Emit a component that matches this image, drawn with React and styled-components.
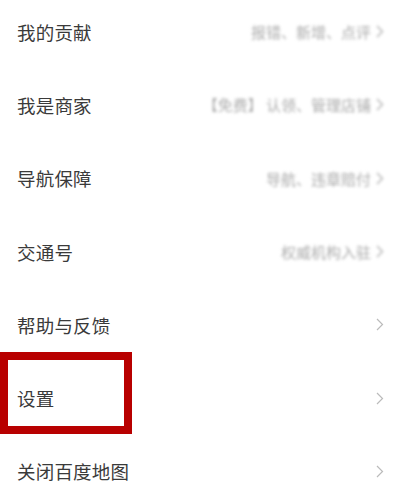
import React from "react"
import styled, { createGlobalStyle } from "styled-components"

const GlobalStyle = createGlobalStyle`
  html, body {
    margin: 0;
    padding: 0;
    background: #fff;
  }
  body {
    font-family: "Noto Sans CJK SC", "Noto Sans", sans-serif;
  }
`

const items = [
  { title: "我的贡献", hint: "报错、新增、点评" },
  { title: "我是商家", hint: "【免费】 认领、管理店铺" },
  { title: "导航保障", hint: "导航、违章赔付" },
  { title: "交通号", hint: "权威机构入驻" },
  { title: "帮助与反馈" },
  { title: "设置", marked: true },
  { title: "关闭百度地图" },
]

const Chevron = ({ color }) => (
  <svg width="8" height="13" viewBox="0 0 8 13" fill="none">
    <path d="M1 1l5.5 5.5L1 12" stroke={color} strokeWidth="1.2" />
  </svg>
)

const App = () => (
  <>
    <GlobalStyle />
    <MenuList>
      {items.map((item) => (
        <MenuRow key={item.title}>
          <MenuTitle>{item.title}</MenuTitle>
          {item.hint ? (
            <MenuHint>
              {item.hint}
              <Chevron color="#aaa" />
            </MenuHint>
          ) : (
            <ArrowWrap>
              <Chevron color="#bbb" />
            </ArrowWrap>
          )}
          {item.marked && <HighlightBox />}
        </MenuRow>
      ))}
    </MenuList>
  </>
)

export default App

const MenuList = styled.div`
  display: flex;
  flex-direction: column;
  margin-top: -5px;
`

const MenuRow = styled.div`
  position: relative;
  height: 73.3px;
  display: flex;
  align-items: center;
  justify-content: space-between;
  padding: 0 10px 0 17px;
`

const MenuTitle = styled.span`
  font-size: 18.5px;
  color: #3a3a3a;
  letter-spacing: 0.2px;
`

const MenuHint = styled.span`
  display: flex;
  align-items: center;
  gap: 5px;
  font-size: 15px;
  color: #aaa;
  filter: blur(1.4px);
`

const ArrowWrap = styled.span`
  display: flex;
  align-items: center;
`

const HighlightBox = styled.div`
  position: absolute;
  left: 0;
  top: -9px;
  width: 116px;
  height: 66px;
  border: 8px solid #b80000;
  pointer-events: none;
`
